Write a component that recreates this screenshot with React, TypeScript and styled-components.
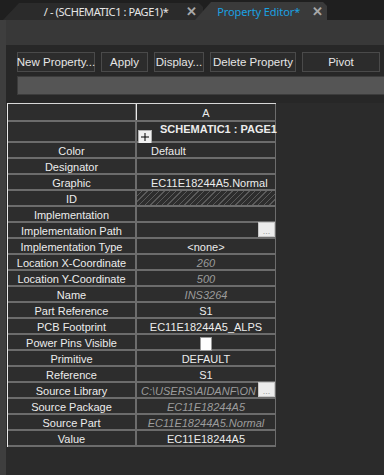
import styled, { createGlobalStyle } from 'styled-components';

const GlobalStyle = createGlobalStyle`
  html, body {
    margin: 0;
    padding: 0;
    background: #1f1f1f;
    overflow: hidden;
  }
  * { box-sizing: border-box; }
`;

const Page = styled.div`
  width: 384px;
  height: 475px;
  display: flex;
  flex-direction: column;
  background: #1f1f1f;
  font-family: 'Noto Sans', 'Open Sans', sans-serif;
`;

const TabBar = styled.div`
  height: 20px;
  display: flex;
  align-items: flex-end;
  padding-left: 3px;
`;

const Tab = styled.div<{ $active?: boolean; $width: number }>`
  position: relative;
  width: ${(p) => p.$width}px;
  height: ${(p) => (p.$active ? 18 : 17)}px;
  margin-left: ${(p) => (p.$active ? -8 : 0)}px;
  display: flex;
  align-items: center;
  justify-content: flex-end;
  gap: ${(p) => (p.$active ? 12 : 18)}px;
  padding-right: ${(p) => (p.$active ? 4 : 6)}px;
  background: ${(p) => (p.$active ? '#3a3a3a' : '#2b2b2b')};
  color: ${(p) => (p.$active ? '#1ba1e2' : '#e6e6e6')};
  font-size: 11px;
  letter-spacing: ${(p) => (p.$active ? '-0.1px' : '-0.4px')};
  clip-path: polygon(16px 0, calc(100% - 4px) 0, 100% 4px, 100% 100%, 0 100%);
  z-index: ${(p) => (p.$active ? 1 : 0)};
`;

const Close = styled.span`
  color: #a8a8a8;
  font-size: 13px;
  font-weight: bold;
  line-height: 1;
`;

const Frame = styled.div`
  flex: 1;
  display: flex;
  flex-direction: column;
  border-left: 6px solid #3e3e3e;
  background: #2a2a2a;
`;

const Band = styled.div`
  height: 25px;
  background: #383838;
`;

const Toolbar = styled.div`
  display: flex;
  flex-direction: column;
  gap: 4px;
  padding: 7px 0 0 11px;
  background: #272727;
  height: 58px;
`;

const ButtonRow = styled.div`
  display: flex;
  gap: 6px;
`;

const Button = styled.div<{ $width: number }>`
  width: ${(p) => p.$width}px;
  height: 20px;
  display: flex;
  align-items: center;
  justify-content: center;
  border: 1px solid #4a4a4a;
  background: #2c2c2c;
  color: #e6e6e6;
  font-family: 'Liberation Sans', Arial, sans-serif;
  font-size: 11.5px;
  white-space: nowrap;
`;

const Filter = styled.div`
  height: 19px;
  margin-right: -10px;
  background: #555555;
  border: 1px solid #3c3c3c;
`;

const GridArea = styled.div`
  flex: 1;
  padding-left: 1px;
  background: #2b2b2b;
`;

const Grid = styled.div`
  width: 269px;
  display: grid;
  grid-template-columns: 127px 138px;
  grid-auto-rows: 14px;
  grid-template-rows: 16px 19px;
  gap: 2px;
  padding: 0 2px 2px 0;
  background: #6c6c6c;
  border-top: 1px solid #d8d8d8;
  border-left: 1px solid #e8e8e8;
  font-family: 'Liberation Sans', Arial, sans-serif;
  font-size: 11px;
  color: #ececec;
`;

const Cell = styled.div<{ $align?: 'left' | 'center'; $muted?: boolean; $hatch?: boolean }>`
  position: relative;
  display: flex;
  align-items: center;
  justify-content: ${(p) => (p.$align === 'left' ? 'flex-start' : 'center')};
  padding-left: ${(p) => (p.$align === 'left' ? '14px' : '0')};
  padding-top: 2px;
  background: #2d2d2d;
  white-space: nowrap;
  line-height: 14px;
  color: ${(p) => (p.$muted ? '#9c9c9c' : '#ececec')};
  font-style: ${(p) => (p.$muted ? 'italic' : 'normal')};
  ${(p) =>
    p.$hatch &&
    `background: repeating-linear-gradient(135deg, #2d2d2d 0 3px, #5a5a5a 3px 4px);`}
`;

const HeadCell = styled(Cell)`
  border-left: 1px solid #e8e8e8;
  margin-left: -1px;
`;

const TitleCell = styled(Cell)`
  align-items: flex-start;
  padding: 0 0 0 3px;
  gap: 8px;
  font-weight: bold;
`;

const Expander = styled.div`
  width: 14px;
  height: 14px;
  margin-top: 8px;
  flex-shrink: 0;
  background: #f0f0f0;
  border: 1px solid #b0b0b0;
  display: flex;
  align-items: center;
  justify-content: center;
`;

const TitleText = styled.span`
  margin-top: 0;
`;

const Ellipsis = styled.div`
  position: absolute;
  right: 0;
  top: -1px;
  width: 17px;
  height: 15px;
  background: #ececec;
  border: 1px solid #c8c8c8;
  color: #9a9a9a;
  font-size: 9px;
  font-style: normal;
  display: flex;
  align-items: flex-end;
  justify-content: center;
  line-height: 9px;
`;

const Check = styled.div`
  width: 12px;
  height: 14px;
  margin-top: 2px;
  background: #ffffff;
  border: 1px solid #9a9a9a;
`;

type Row = {
  name: string;
  value?: string;
  align?: 'left' | 'center';
  muted?: boolean;
  hatch?: boolean;
  browse?: boolean;
  check?: boolean;
};

const rows: Row[] = [
  { name: 'Color', value: 'Default', align: 'left' },
  { name: 'Designator' },
  { name: 'Graphic', value: 'EC11E18244A5.Normal', align: 'left' },
  { name: 'ID', hatch: true },
  { name: 'Implementation' },
  { name: 'Implementation Path', browse: true },
  { name: 'Implementation Type', value: '<none>' },
  { name: 'Location X-Coordinate', value: '260', muted: true },
  { name: 'Location Y-Coordinate', value: '500', muted: true },
  { name: 'Name', value: 'INS3264', muted: true },
  { name: 'Part Reference', value: 'S1' },
  { name: 'PCB Footprint', value: 'EC11E18244A5_ALPS' },
  { name: 'Power Pins Visible', check: true },
  { name: 'Primitive', value: 'DEFAULT' },
  { name: 'Reference', value: 'S1' },
  { name: 'Source Library', value: 'C:\\USERS\\AIDANF\\ON', muted: true, browse: true },
  { name: 'Source Package', value: 'EC11E18244A5', muted: true },
  { name: 'Source Part', value: 'EC11E18244A5.Normal', muted: true },
  { name: 'Value', value: 'EC11E18244A5' },
];

const buttons = [
  { label: 'New Property...', width: 78 },
  { label: 'Apply', width: 47 },
  { label: 'Display...', width: 50 },
  { label: 'Delete Property', width: 86 },
  { label: 'Pivot', width: 78 },
];

export default function App() {
  return (
    <>
      <GlobalStyle />
      <Page>
        <TabBar>
          <Tab $width={200}>
            <span>/ - (SCHEMATIC1 : PAGE1)*</span>
            <Close>✕</Close>
          </Tab>
          <Tab $active $width={132}>
            <span>Property Editor*</span>
            <Close>✕</Close>
          </Tab>
        </TabBar>
        <Frame>
          <Band />
          <Toolbar>
            <ButtonRow>
              {buttons.map((b) => (
                <Button key={b.label} $width={b.width}>
                  {b.label}
                </Button>
              ))}
            </ButtonRow>
            <Filter />
          </Toolbar>
          <GridArea>
            <Grid>
              <Cell />
              <HeadCell>A</HeadCell>
              <Cell />
              <TitleCell>
                <Expander>
                  <svg width="8" height="8" viewBox="0 0 8 8">
                    <path d="M0 4H8M4 0V8" stroke="#000" strokeWidth="1" />
                  </svg>
                </Expander>
                <TitleText>SCHEMATIC1 : PAGE1</TitleText>
              </TitleCell>
              {rows.flatMap((r) => [
                <Cell key={r.name + '-n'}>{r.name}</Cell>,
                <Cell
                  key={r.name + '-v'}
                  $align={r.align ?? (r.browse && r.value ? 'left' : 'center')}
                  $muted={r.muted}
                  $hatch={r.hatch}
                  style={r.browse && r.value ? { paddingLeft: 4 } : undefined}
                >
                  {r.value}
                  {r.check && <Check />}
                  {r.browse && <Ellipsis>...</Ellipsis>}
                </Cell>,
              ])}
            </Grid>
          </GridArea>
        </Frame>
      </Page>
    </>
  );
}
